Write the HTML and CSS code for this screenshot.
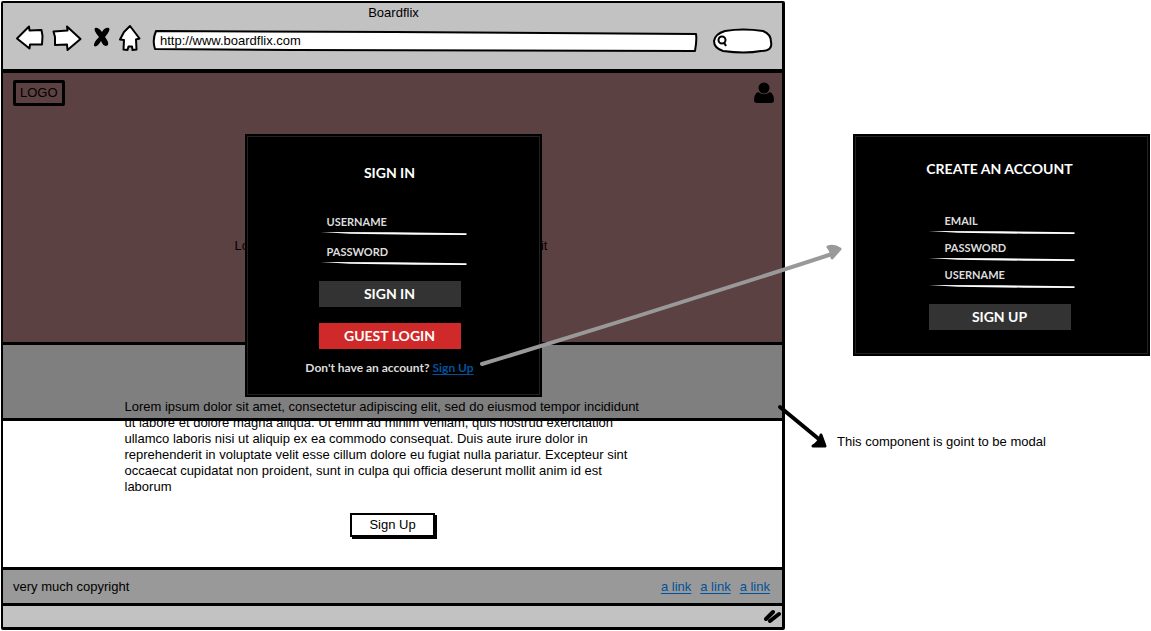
FILE: index.html
```html
<!DOCTYPE html>
<html lang="en">
<head>
<meta charset="utf-8">
<meta name="viewport" content="width=device-width, initial-scale=1">
<title>Boardflix</title>
<link rel="stylesheet" href="styles.css">
</head>
<body>
<main class="scene">
  <section class="browser" aria-label="Browser window">
    <header class="chrome">
      <div class="chrome-title">Boardflix</div>
      <div class="toolbar">
        <button class="tool" type="button" aria-label="Back">
          <svg width="32" height="28" viewBox="14 23 32 28"><path class="shape" d="M17 37.500L29 25.500 29.500 29.500 41.500 29 42.500 35 42 43.500 30 43.500 29.500 47.500Z"/></svg>
        </button>
        <button class="tool" type="button" aria-label="Forward">
          <svg width="34" height="28" viewBox="50 23 34 28"><path class="shape" d="M53.500 30.500L67.500 29.500 67 25.500 80.500 38 67.500 49 67 43.500 55 44 55 36Z"/></svg>
        </button>
        <button class="tool" type="button" aria-label="Stop">
          <svg width="26" height="28" viewBox="88 23 26 28"><path d="M95 27Q98 26 102 31 105 26 109 27 111 29 105 36 109 41 108 44 104 47 101 40 97 47 94 45 93 42 99 36 93 29 95 27Z"/></svg>
        </button>
        <button class="tool" type="button" aria-label="Home">
          <svg width="24" height="28" viewBox="118 23 24 28"><path class="shape" d="M130 25L139.500 37.500 136 38.500 136.500 48.500 132.500 49 132 45.500 128.500 45.500 127.500 49 123.500 48.500 124 39 120 38.500 124 31Z"/></svg>
        </button>
        <div class="address">
          <svg class="frame" viewBox="0 0 544 22" preserveAspectRatio="none" aria-hidden="true"><path class="shape" d="M3 1L240 2 542 4Q543 10 541 21L140 20 2 19Q-1 10 3 1Z"/></svg>
          <input type="text" aria-label="Address" value="http://www.boardflix.com">
        </div>
        <div class="search">
          <svg class="frame" viewBox="0 0 60 26" preserveAspectRatio="none" aria-hidden="true"><path class="shape" d="M12 3Q30 0 50 3 58 6 58 14 60 23 48 23 32 26 10 23 1 20 1 13 2 6 12 3Z"/></svg>
          <svg class="lens" width="14" height="14" viewBox="0 0 14 14" aria-hidden="true"><circle cx="7" cy="6" r="3.500"/><path d="M9 8.500L11 12"/></svg>
          <input type="search" aria-label="Search">
        </div>
      </div>
    </header>

    <div class="viewport">
      <div class="hero">
        <div class="hero-bar">
          <a class="logo" href="#">LOGO</a>
          <a class="user" href="#" aria-label="Account">
            <svg width="20" height="22" viewBox="0 0 20 22"><circle cx="10" cy="6" r="5.500"/><path d="M4 10Q10 14.500 16 10 20 12 20 18 20 21 17 21H3Q0 21 0 18 0 12 4 10Z"/></svg>
          </a>
        </div>
        <p class="tagline">Lorem ipsum dolor sit amet, consectetur adipiscing elit</p>
      </div>
      <div class="content">
        <p>Lorem ipsum dolor sit amet, consectetur adipiscing elit, sed do eiusmod tempor incididunt<br>ut labore et dolore magna aliqua. Ut enim ad minim veniam, quis nostrud exercitation<br>ullamco laboris nisi ut aliquip ex ea commodo consequat. Duis aute irure dolor in<br>reprehenderit in voluptate velit esse cillum dolore eu fugiat nulla pariatur. Excepteur sint<br>occaecat cupidatat non proident, sunt in culpa qui officia deserunt mollit anim id est<br>laborum</p>
        <button class="cta" type="button">Sign Up</button>
      </div>

      <div class="overlay">
        <form class="card">
          <h2>SIGN IN</h2>
          <div class="field"><input type="text" placeholder="USERNAME" aria-label="Username"></div>
          <div class="field"><input type="password" placeholder="PASSWORD" aria-label="Password"></div>
          <button class="btn" type="button">SIGN IN</button>
          <button class="btn btn-guest" type="button">GUEST LOGIN</button>
          <p class="prompt">Don't have an account? <a href="#create">Sign Up</a></p>
        </form>
      </div>
    </div>

    <footer class="footer">
      <span>very much copyright</span>
      <nav class="links"><a href="#">a link</a><a href="#">a link</a><a href="#">a link</a></nav>
    </footer>
    <div class="statusbar">
      <svg width="18" height="16" viewBox="0 0 18 16" aria-hidden="true"><path d="M2 10L9 3M6 12L15 5"/></svg>
    </div>
  </section>

  <aside class="notes">
    <form class="card card-create" id="create">
      <h2>CREATE AN ACCOUNT</h2>
      <div class="field"><input type="email" placeholder="EMAIL" aria-label="Email"></div>
      <div class="field"><input type="password" placeholder="PASSWORD" aria-label="Password"></div>
      <div class="field"><input type="text" placeholder="USERNAME" aria-label="Username"></div>
      <button class="btn" type="button">SIGN UP</button>
    </form>
    <p class="caption">This component is goint to be modal</p>
    <svg class="arrows" width="366" height="220" viewBox="480 240 366 220" aria-hidden="true">
      <path class="link-line" d="M482 364Q660 310 832 254"/>
      <path class="link-head" d="M828 247Q834 245 840 249L832 258Q832 251 828 247Z"/>
      <path class="modal-line" d="M780 407L820 440"/>
      <path class="modal-head" d="M821 435L825 446 813 446Q820 442 821 435Z"/>
    </svg>
  </aside>
</main>
</body>
</html>
```
FILE: styles.css
```css
* { box-sizing: border-box; }

body {
  margin: 0;
  background: #fff;
  color: #000;
  font: 13px/16px "Liberation Sans", Arial, sans-serif;
}

h2, p { margin: 0; }

button, input { font: inherit; color: inherit; }

input {
  min-width: 0;
  border: 0;
  padding: 0;
  background: transparent;
  outline: 0;
}

a { color: #00529b; text-underline-offset: 2px; }

.scene {
  display: grid;
  grid-template-columns: minmax(0, 1fr) 366px;
}

.browser {
  margin: 1px 0 0 1px;
  border: solid #000;
  border-width: 2px 3px 3px 2px;
  border-radius: 2px;
}

.chrome {
  padding: 2px 9px 0 11px;
  height: 70px;
  background: #c2c2c2;
  border-bottom: 4px solid #000;
}

.chrome-title { text-align: center; }

.toolbar {
  display: flex;
  align-items: center;
  gap: 4px;
  padding-top: 1px;
}

.tool { border: 0; padding: 0; background: none; }
.tool svg { display: block; }

.shape {
  fill: #fff;
  stroke: #000;
  stroke-width: 2px;
  stroke-linejoin: round;
  vector-effect: non-scaling-stroke;
}

.address, .search {
  position: relative;
  display: flex;
  align-items: center;
}

.address { flex: 1; height: 22px; margin: 6px 11px 0 7px; }
.search { width: 60px; height: 26px; margin-top: 6px; }
.address input { position: relative; width: 100%; padding: 0 7px; }
.search input { position: relative; flex: 1; }

.frame {
  position: absolute;
  inset: 0;
  width: 100%;
  height: 100%;
  overflow: visible;
}

.lens {
  position: relative;
  margin-left: 2px;
  fill: none;
  stroke: #000;
  stroke-width: 2px;
}

.viewport { position: relative; }

.hero {
  height: 272px;
  background: #b88284;
  border-bottom: 3px solid #000;
}

.hero-bar {
  display: flex;
  justify-content: space-between;
  align-items: center;
  padding: 7px 8px 0 10px;
}

.logo {
  border: 3px solid #000;
  border-radius: 2px;
  padding: 2px 4px;
  color: #000;
  text-decoration: none;
}

.user svg { display: block; }

.tagline { padding: 132px 3px 0 0; text-align: center; }

.content {
  display: flex;
  flex-direction: column;
  align-items: center;
  height: 222px;
  padding-top: 54px;
}

.content p { width: 536px; white-space: nowrap; }

.cta {
  width: 85px;
  height: 24px;
  margin-top: 18px;
  border: 2px solid #000;
  padding: 0;
  background: #fff;
  box-shadow: 2px 2px 0 #000;
}

.overlay {
  position: absolute;
  inset: 0 0 auto;
  display: flex;
  justify-content: center;
  height: 348px;
  padding: 61px 0 0 2px;
  background: rgba(0, 0, 0, 0.5);
  border-bottom: 3px solid #000;
}

.card {
  display: flex;
  flex-direction: column;
  align-items: center;
  width: 297px;
  height: 263px;
  padding: 30px 8px 0 0;
  border: 1px solid #000;
  outline: 1px solid #222;
  outline-offset: -3px;
  background: #000;
  color: #fff;
  font-family: Lato, "Liberation Sans", sans-serif;
  font-size: 14px;
  font-weight: 700;
}

.card h2 {
  margin-bottom: 32px;
  font-size: 14px;
  line-height: 16px;
  font-weight: 700;
}

.field {
  position: relative;
  width: 146px;
  height: 30px;
  margin-left: 8px;
}

.field input {
  display: block;
  width: 100%;
  height: 17px;
  padding-left: 6px;
  font-size: 11px;
}

.field input::placeholder { color: #ddd; opacity: 1; }

.field::after {
  content: "";
  display: block;
  height: 3px;
  margin-top: 2px;
  background: #fff;
  clip-path: polygon(0 0, 50% 5%, 100% 45%, 100% 100%, 65% 90%, 20% 60%);
}

.btn {
  width: 142px;
  height: 26px;
  border: 0;
  padding: 0;
  background: #333;
}

.field + .btn { margin-top: 8px; }
.btn-guest { margin-top: 16px; background: #d02929; }

.prompt {
  margin-top: 11px;
  color: #ddd;
  font-size: 12px;
}

.footer {
  display: flex;
  justify-content: space-between;
  align-items: center;
  height: 39px;
  padding: 0 12px 0 10px;
  background: #999;
  border-top: 3px solid #000;
  border-bottom: 3px solid #000;
}

.links { display: flex; gap: 9px; }

.statusbar {
  display: flex;
  justify-content: flex-end;
  align-items: center;
  height: 21px;
  background: #c2c2c2;
}

.statusbar path {
  fill: none;
  stroke: #000;
  stroke-width: 4px;
  stroke-linecap: round;
}

.notes {
  position: relative;
  padding: 134px 0 0 68px;
}

.card-create {
  height: 222px;
  padding: 26px 4px 0 0;
}

.card-create h2 { margin-bottom: 36px; }
.card-create .field { height: 27px; margin-left: 4px; }
.card-create .field input { height: 16px; padding-left: 16px; }
.card-create .field + .btn { margin-top: 10px; }

.caption { margin: 78px 0 0 -16px; }

.arrows {
  position: absolute;
  top: 240px;
  left: -305px;
  pointer-events: none;
}

.link-line, .modal-line { fill: none; stroke-width: 4px; stroke-linecap: round; }
.link-line { stroke: #999; }
.link-head { fill: #999; stroke: #999; stroke-width: 3px; stroke-linejoin: round; }
.modal-line { stroke: #000; }
.modal-head { stroke: #000; stroke-width: 3px; stroke-linejoin: round; }
```
